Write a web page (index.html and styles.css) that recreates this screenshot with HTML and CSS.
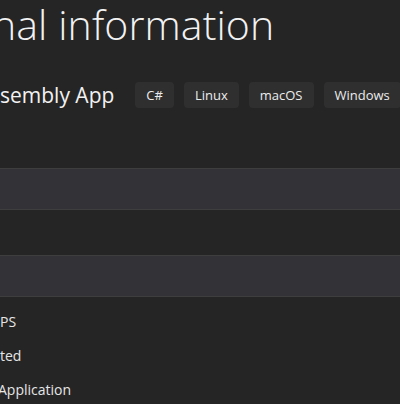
FILE: index.html
```html
<!DOCTYPE html>
<html lang="en">
<head>
  <meta charset="utf-8">
  <meta name="viewport" content="width=device-width, initial-scale=1">
  <title>Additional information</title>
  <link rel="stylesheet" href="styles.css">
</head>
<body>
  <main class="dialog">
    <h1 class="title">nal information</h1>
    <div class="template">
      <span class="template-name">sembly App</span>
      <ul class="tags">
        <li class="tag">C#</li>
        <li class="tag">Linux</li>
        <li class="tag">macOS</li>
        <li class="tag">Windows</li>
      </ul>
    </div>
    <div class="select first"></div>
    <div class="select"></div>
    <ul class="options">
      <li>PS</li>
      <li>ted</li>
      <li class="cut">Application</li>
    </ul>
  </main>
</body>
</html>
```

FILE: styles.css
```css
body {
  margin: 0;
  background-color: #252525;
  color: #f2f2f2;
  font-family: "Open Sans", "Noto Sans", sans-serif;
  overflow: hidden;
}
.dialog {
  width: 400px;
  height: 404px;
}
.title {
  margin: 0 0 0 -8px;
  font-size: 41px;
  font-weight: 300;
  line-height: 48px;
  letter-spacing: 0.1px;
  white-space: nowrap;
}
.template {
  display: flex;
  align-items: center;
  gap: 21px;
  margin-top: 34px;
  height: 26px;
}
.template-name {
  font-size: 21px;
  line-height: 26px;
  white-space: nowrap;
}
.tags {
  display: flex;
  gap: 10px;
  margin: 0;
  padding: 0;
  list-style: none;
}
.tag {
  flex-shrink: 0;
  height: 26px;
  line-height: 26px;
  padding: 0 11px;
  border-radius: 4px;
  background-color: #2f2f2f;
  font-size: 13px;
  color: #ececec;
}
.select {
  height: 40px;
  border-top: 1px solid #3e3e3e;
  border-bottom: 1px solid #3e3e3e;
  background-color: #333237;
  margin-top: 45px;
}
.select.first {
  margin-top: 60px;
}
.options {
  margin: 8px 0 0;
  padding: 0;
  list-style: none;
}
.options li {
  font-size: 14px;
  line-height: 34px;
  color: #e6e6e6;
}
.options .cut {
  margin-left: -2px;
}
```
